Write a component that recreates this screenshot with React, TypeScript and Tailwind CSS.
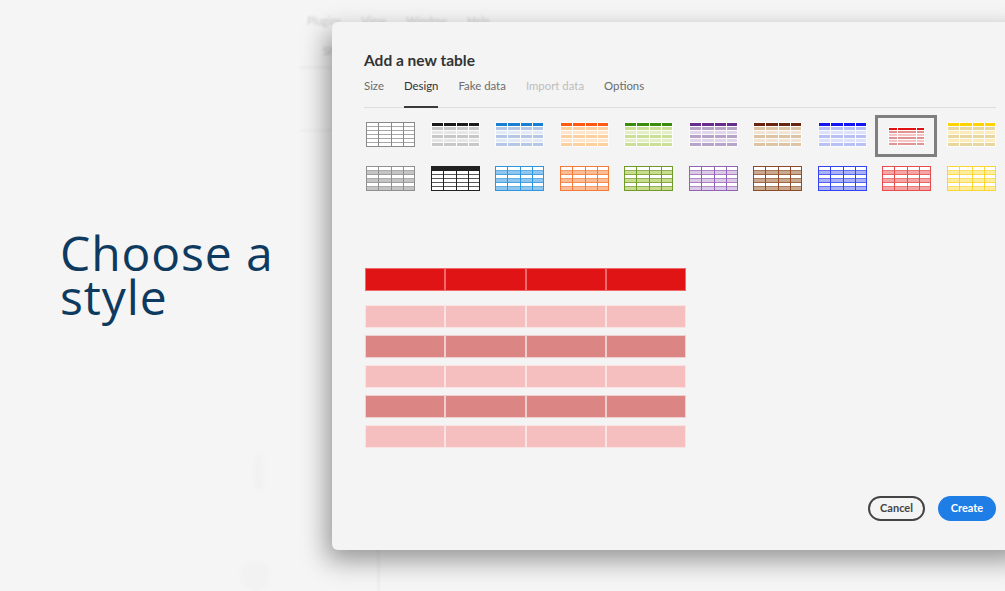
import React from 'react';

type Striped = { kind: 'striped'; head: string; mid: string; light: string };
type Grid = { kind: 'grid'; line: string; tint: string; header?: boolean };
type Thumb = Striped | Grid;

const topRow: Thumb[] = [
  { kind: 'grid', line: '#8a8a8a', tint: '#ffffff' },
  { kind: 'striped', head: '#1a1a1a', mid: '#c8c8c8', light: '#e6e6e6' },
  { kind: 'striped', head: '#1a7fd0', mid: '#b4c8e6', light: '#e2eaf6' },
  { kind: 'striped', head: '#ff5a14', mid: '#fdd0a0', light: '#fde6cc' },
  { kind: 'striped', head: '#3c8c0c', mid: '#cbe096', light: '#e4eec6' },
  { kind: 'striped', head: '#6a2c8c', mid: '#b8a4c8', light: '#e2d6ea' },
  { kind: 'striped', head: '#6a2410', mid: '#dcc4a4', light: '#f0e4d4' },
  { kind: 'striped', head: '#1414f0', mid: '#b8c0f4', light: '#dde1fa' },
  { kind: 'striped', head: '#e01010', mid: '#e09494', light: '#f6c4c4' },
  { kind: 'striped', head: '#ffd200', mid: '#e8d8a0', light: '#fdecb8' },
];

const bottomRow: Thumb[] = [
  { kind: 'grid', line: '#909090', tint: '#c4c4c4' },
  { kind: 'grid', line: '#222222', tint: '#ffffff', header: true },
  { kind: 'grid', line: '#2f95dc', tint: '#8ec6ef' },
  { kind: 'grid', line: '#f57a3a', tint: '#f9bc94' },
  { kind: 'grid', line: '#6e9a28', tint: '#c8dc8c' },
  { kind: 'grid', line: '#9464b4', tint: '#dccbe6' },
  { kind: 'grid', line: '#8c4c2c', tint: '#cba98c' },
  { kind: 'grid', line: '#3444f2', tint: '#a8b2f4' },
  { kind: 'grid', line: '#e84c4c', tint: '#f4a6a6' },
  { kind: 'grid', line: '#f8d634', tint: '#fdec9c' },
];

const SELECTED = 8;

function ThumbSvg({ t, w = 49, h = 25 }: { t: Thumb; w?: number; h?: number }) {
  const cols = [12.25, 24.5, 36.75];

  if (t.kind === 'striped') {
    const rows = [5, 9, 13, 17, 21];
    return (
      <svg width={w} height={h} viewBox="0 0 49 25" shapeRendering="crispEdges">
        <rect x="0" y="0" width="49" height="25" fill="#ffffff" opacity="0.7" />
        <rect x="1" y="1" width="47" height="3" fill={t.head} />
        {rows.map((y, i) => (
          <rect key={y} x="1" y={y} width="47" height="3" fill={i % 2 === 0 ? t.mid : t.light} />
        ))}
        {cols.map((x) => (
          <rect key={x} x={x} y="1" width="1" height="23" fill="#ffffff" />
        ))}
      </svg>
    );
  }

  const rows = [0, 1, 2, 3, 4, 5];
  return (
    <svg width={w} height={h} viewBox="0 0 49 25" shapeRendering="crispEdges">
      <rect x="0" y="0" width="49" height="25" fill="#ffffff" />
      {rows.map((i) => (
        <rect
          key={i}
          x="0"
          y={i * 4 + 0.5}
          width="49"
          height="4"
          fill={t.header && i === 0 ? t.line : i % 2 === 1 ? t.tint : '#ffffff'}
        />
      ))}
      {rows.slice(1).map((i) => (
        <rect key={'h' + i} x="0" y={i * 4} width="49" height="1" fill={t.line} opacity="0.75" />
      ))}
      {cols.map((x) => (
        <rect key={x} x={x} y="0" width="1" height="25" fill={t.line} />
      ))}
      <rect x="0.5" y="0.5" width="48" height="24" fill="none" stroke={t.line} strokeWidth="1" />
    </svg>
  );
}

function ThumbRow({ items, selected }: { items: Thumb[]; selected?: number }) {
  return (
    <div className="flex gap-[15.5px]">
      {items.map((t, i) => (
        <div key={i} className="relative w-[49px] h-[25px] shrink-0">
          {i === selected ? (
            <div className="absolute -left-[7px] -top-[7px] w-[62px] h-[42px] border-[3px] border-[#7f7f7f] flex items-center justify-center">
              <ThumbSvg t={t} w={41} h={19} />
            </div>
          ) : (
            <ThumbSvg t={t} />
          )}
        </div>
      ))}
    </div>
  );
}

const previewRows = ['light', 'dark', 'light', 'dark', 'light'];

function Preview() {
  return (
    <div className="w-[321px] flex flex-col">
      <div className="grid grid-cols-4 h-[23px]">
        {[0, 1, 2, 3].map((c) => (
          <div key={c} className="bg-[#e01414] border border-[#f7a3a3]/60" />
        ))}
      </div>
      <div className="flex flex-col gap-[7px] mt-[14px]">
        {previewRows.map((r, i) => (
          <div key={i} className="grid grid-cols-4 h-[23px]">
            {[0, 1, 2, 3].map((c) => (
              <div
                key={c}
                className={
                  r === 'light'
                    ? 'bg-[#f4bfbe] border border-[#fbe3e2]'
                    : 'bg-[#db8684] border border-[#f1cfce]'
                }
              />
            ))}
          </div>
        ))}
      </div>
    </div>
  );
}

const tabs = [
  { label: 'Size', cls: 'text-[#6b6b6b]' },
  { label: 'Design', cls: 'text-[#333333] border-b-2 border-[#3a3a3a]' },
  { label: 'Fake data', cls: 'text-[#6b6b6b]' },
  { label: 'Import data', cls: 'text-[#bdbdbd]' },
  { label: 'Options', cls: 'text-[#6b6b6b]' },
];

export default function App() {
  return (
    <div
      className="relative w-[1005px] h-[591px] overflow-hidden bg-[#f5f5f5] flex"
      style={{ fontFamily: "Lato, 'Open Sans', sans-serif" }}
    >
      {/* faded app behind the dialog */}
      <div className="absolute inset-0 pointer-events-none blur-[1px]">
        <div className="absolute left-[307px] top-[13px] flex gap-[20px] text-[11px] text-[#cdcdcd]">
          <span>Plugins</span>
          <span>View</span>
          <span>Window</span>
          <span>Help</span>
        </div>
        <div className="absolute left-[323px] top-[43px] text-[11px] text-[#c8c8c8]">Sh</div>
        <div className="absolute left-[300px] top-[67px] w-[40px] h-px bg-[#e4e4e4]" />
        <div className="absolute left-[300px] top-[130px] w-[40px] h-px bg-[#e8e8e8]" />
        <div className="absolute left-[378px] top-[540px] w-px h-[51px] bg-[#e4e4e4]" />
        <div className="absolute left-[254px] top-[455px] w-[10px] h-[36px] rounded-full bg-[#f2f2f2]" />
        <div className="absolute left-[240px] top-[560px] w-[30px] h-[31px] rounded-full bg-[#f2f2f2]" />
      </div>

      {/* left caption */}
      <div className="relative w-[332px] shrink-0 pl-[60px] pt-[231px]">
        <h1
          className="text-[48px] leading-[44px] font-medium text-[#0d3a5e] tracking-[0.9px]"
          style={{ fontFamily: "'Open Sans', 'Noto Sans', sans-serif" }}
        >
          Choose a
          <br />
          style
        </h1>
      </div>

      {/* dialog */}
      <div className="relative z-10 mt-[22px] w-[696px] h-[528px] shrink-0 rounded-md bg-[#f4f4f4] shadow-[-5px_10px_26px_rgba(0,0,0,0.4)] flex flex-col px-8 pt-[28px] pb-[29px]">
        <h2 className="text-[15.5px] leading-[20px] font-bold text-[#333333]">Add a new table</h2>

        <div className="mt-[8px] flex gap-5 border-b border-[#dedede] text-[11.4px] leading-[16px]">
          {tabs.map((t) => (
            <div key={t.label} className={`pb-[12px] -mb-px ${t.cls}`}>
              {t.label}
            </div>
          ))}
        </div>

        <div className="mt-[14px] pl-[2px] flex flex-col gap-[19px]">
          <ThumbRow items={topRow} selected={SELECTED} />
          <ThumbRow items={bottomRow} />
        </div>

        <div className="mt-[77px] pl-px">
          <Preview />
        </div>

        <div className="mt-auto flex justify-end gap-[13px]">
          <button className="w-[57px] h-[25px] rounded-full border-2 border-[#444444] text-[11px] font-bold text-[#444444]">
            Cancel
          </button>
          <button className="w-[58px] h-[25px] rounded-full bg-[#1f7de6] text-[11px] font-bold text-white">
            Create
          </button>
        </div>
      </div>
    </div>
  );
}
